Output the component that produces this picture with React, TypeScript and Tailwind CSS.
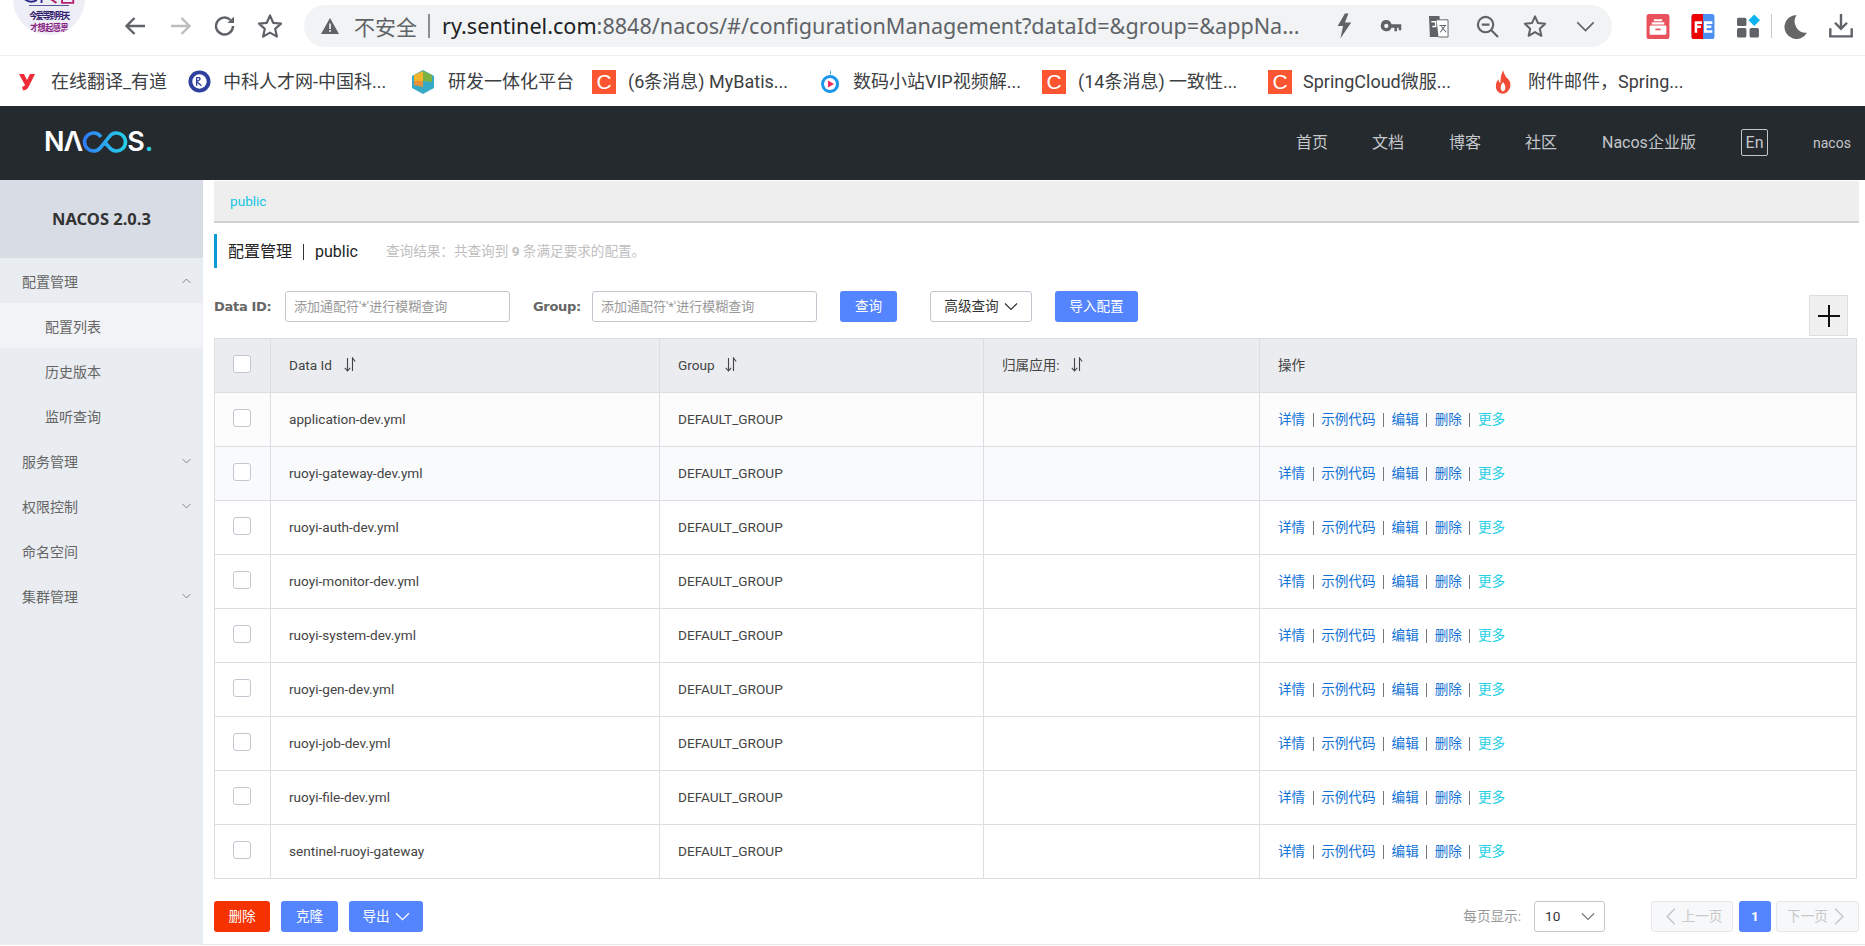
import React from "react";

const FONT = "[font-family:'Roboto','Noto_Sans_CJK_SC',sans-serif]";

function Chevron({ up = false, className = "" }: { up?: boolean; className?: string }) {
  return (
    <svg viewBox="0 0 14 8" fill="none" stroke="currentColor" strokeWidth="1.2" className={className}>
      <path d={up ? "M1 7 L7 1 L13 7" : "M1 1 L7 7 L13 1"} />
    </svg>
  );
}

function Sort({ className = "ml-[10px]" }: { className?: string }) {
  return (
    <svg viewBox="0 0 12 15" width="12" height="15" fill="none" stroke="#444" strokeWidth="1.1" className={`${className} -mt-[2px] shrink-0`}>
      <path d="M3.5 1 V14 M0.8 10.8 L3.5 14 L6.2 10.8" />
      <path d="M8.5 14 V1 L11.2 4.5" />
    </svg>
  );
}

function Toolbar() {
  return (
    <div className="relative h-[56px] shrink-0 bg-white border-b border-[#ececec] flex items-start">
      <div className="absolute left-[13px] -top-[37px] w-[72px] h-[72px] rounded-full bg-[#eeeef6] overflow-hidden flex flex-col items-center justify-end pb-[2px] font-['Noto_Sans_CJK_SC',sans-serif] font-bold">
        <svg viewBox="0 0 60 5" className="w-[56px] h-[5px] shrink-0">
          <path d="M4 0 Q10 5 17 1 M22 0 L22 4" fill="none" stroke="#2a2a8a" strokeWidth="2" />
          <path d="M32 0 L38 4 M44 0 H56 V4 H44 Z" fill="none" stroke="#b3206c" strokeWidth="2" />
        </svg>
        <span className="w-[40px] h-px bg-[#55559a] mt-[1px] mb-[3px] shrink-0" />
        <span className="text-[8px] h-[12px] leading-[12px] scale-y-[1.2] tracking-[-1.4px] text-[#33206e] whitespace-nowrap">今爱等到明天</span>
        <span className="text-[8px] h-[12px] leading-[12px] scale-y-[1.2] tracking-[-0.4px] text-[#8a2484] whitespace-nowrap">才想起感恩</span>
      </div>

      <div className="flex items-center h-[52px] ml-[124px] text-[#5f6368]">
        <svg viewBox="0 0 22 20" className="w-[22px] h-[20px]" fill="none" stroke="currentColor" strokeWidth="2.4"><path d="M21 10 H3 M10.5 2 L2.5 10 L10.5 18" /></svg>
        <svg viewBox="0 0 22 20" className="w-[22px] h-[20px] ml-[24px] text-[#bdbdbd]" fill="none" stroke="currentColor" strokeWidth="2.4"><path d="M1 10 H19 M11.5 2 L19.5 10 L11.5 18" /></svg>
        <svg viewBox="0 0 24 24" className="w-[24px] h-[24px] ml-[21px]" fill="none" stroke="currentColor" strokeWidth="2.4"><path d="M20 12 A8.5 8.5 0 1 1 17.5 6" /><path d="M21 2.5 V9 H14.5 Z" fill="currentColor" stroke="none" /></svg>
        <svg viewBox="0 0 26 26" className="w-[26px] h-[26px] ml-[20px]" fill="none" stroke="currentColor" strokeWidth="2.2"><path d="M13 2.5 L16.2 9.8 L24 10.6 L18.2 15.9 L19.9 23.6 L13 19.6 L6.1 23.6 L7.8 15.9 L2 10.6 L9.8 9.8 Z" strokeLinejoin="round" /></svg>
      </div>

      <div className="ml-[21px] mt-[5px] w-[1308px] h-[42px] rounded-full bg-[#f1f3f4] flex items-center pl-[17px] shrink-0 text-[#5f6368]">
        <svg viewBox="0 0 18 16" className="w-[18px] h-[16px] shrink-0" fill="currentColor"><path d="M9 0 L18 16 H0 Z" /><rect x="8.2" y="5.5" width="1.7" height="5.5" fill="#f1f3f4" /><rect x="8.2" y="12" width="1.7" height="1.8" fill="#f1f3f4" /></svg>
        <span className="ml-[15px] text-[21px] font-['Noto_Sans_CJK_SC',sans-serif] leading-none">不安全</span>
        <span className="ml-[11px] w-[2px] h-[24px] bg-[#8a8d91]" />
        <span className="ml-[12px] text-[21.6px] font-['Noto_Sans',sans-serif] leading-none whitespace-nowrap w-[862px] shrink-0">
          <span className="text-[#202124]">ry.sentinel.com</span>:8848/nacos/#/configurationManagement?dataId=&amp;group=&amp;appNa...
        </span>
        <svg viewBox="0 0 20 28" className="w-[18px] h-[26px] ml-[31px]" fill="currentColor"><path d="M11 0 L3 14 H9 L6 28 L18 10 H11 L15 0 Z" /></svg>
        <svg viewBox="0 0 24 14" className="w-[22px] h-[12px] ml-[27px]" fill="currentColor"><path d="M6.5 0 A6.5 6.5 0 1 0 12.6 9 H16 V13 H19 V9 H21 V12 H24 V5 H12.6 A6.5 6.5 0 0 0 6.5 0 Z M6.5 4.5 A2.5 2.5 0 1 1 6.5 9.5 A2.5 2.5 0 0 1 6.5 4.5 Z" fillRule="evenodd" /></svg>
        <svg viewBox="0 0 22 24" className="w-[21px] h-[23px] ml-[26px]"><path d="M1 1 H12 L14 23 H2 Z" fill="currentColor" /><path d="M9 5 H21 V23 H11" fill="#fff" stroke="currentColor" strokeWidth="1" /><path d="M3.5 7 H8 V12 H4.5" stroke="#fff" strokeWidth="1.4" fill="none" /><path d="M12 11 H19 M13 18 L18 11 M14 12 L19 18" stroke="currentColor" strokeWidth="1.1" fill="none" /></svg>
        <svg viewBox="0 0 24 24" className="w-[23px] h-[23px] ml-[27px]" fill="none" stroke="currentColor" strokeWidth="2.2"><circle cx="10" cy="10" r="8" /><path d="M6 10 H14 M16 16 L23 23" /></svg>
        <svg viewBox="0 0 26 26" className="w-[24px] h-[24px] ml-[24px]" fill="none" stroke="currentColor" strokeWidth="2.2"><path d="M13 2.5 L16.2 9.8 L24 10.6 L18.2 15.9 L19.9 23.6 L13 19.6 L6.1 23.6 L7.8 15.9 L2 10.6 L9.8 9.8 Z" strokeLinejoin="round" /></svg>
        <Chevron className="w-[19px] h-[11px] ml-[29px]" />
      </div>

      <div className="flex items-center h-[52px] ml-[34px]">
        <svg viewBox="0 0 22 24" className="w-[24px] h-[25px]"><rect width="22" height="24" rx="2.5" fill="#e9525d" /><path d="M7 5 H15 V7 H7 Z M5 8 H17 V10 H5 Z" fill="#fff" /><rect x="3" y="11" width="16" height="9" rx="1" fill="#fff" /><rect x="8.5" y="14" width="5" height="1.6" fill="#e9525d" /></svg>
        <svg viewBox="0 0 22 24" className="w-[24px] h-[25px] ml-[21px]"><rect width="22" height="24" rx="2.5" fill="#4d90f0" /><path d="M2.5 0 H11 V24 H2.5 A2.5 2.5 0 0 1 0 21.5 V2.5 A2.5 2.5 0 0 1 2.5 0 Z" fill="#ee0000" /><path d="M3 7 H10 V9.5 H5.5 V11 H9 V13.5 H5.5 V18 H3 Z M12 7 H20 V9.5 H14.5 V11 H19 V13.5 H14.5 V15.5 H20 V18 H12 Z" fill="#fff" /></svg>
        <svg viewBox="0 0 22 22" className="w-[23px] h-[24px] ml-[22px]"><rect x="0" y="3" width="9" height="8" rx="1.5" fill="#5f6368" /><rect x="0" y="13" width="9" height="9" rx="1.5" fill="#5f6368" /><rect x="12" y="13" width="9" height="9" rx="1.5" fill="#5f6368" /><path d="M16.5 0 L22 5.5 L16.5 11 L11 5.5 Z" fill="#0cb4f2" /></svg>
        <span className="w-px h-[24px] bg-[#c8c8c8] ml-[11px]" />
        <svg viewBox="0 0 24 24" className="w-[25px] h-[25px] ml-[11px]" fill="#666"><path d="M13 1 A11.5 11.5 0 1 0 23 18 A11 11 0 0 1 13 1 Z" /></svg>
        <svg viewBox="0 0 22 22" className="w-[24px] h-[24px] ml-[21px]" fill="none" stroke="#5f6368" strokeWidth="2.2"><path d="M11 0 V13 M5.5 8 L11 13.5 L16.5 8 M1.2 13 V20.5 H20.8 V13" /></svg>
      </div>
    </div>
  );
}

function CIcon() {
  return (
    <span className="w-[24px] h-[24px] bg-[#fc5531] text-white text-[21px] leading-[24px] text-center font-['Liberation_Sans',sans-serif] shrink-0">C</span>
  );
}

function BookmarkText({ children, className = "" }: { children: React.ReactNode; className?: string }) {
  return <span className={`text-[#3c4043] text-[18px] whitespace-nowrap leading-none ${className}`}>{children}</span>;
}

function Bookmarks() {
  return (
    <div className={`h-[50px] shrink-0 bg-white flex items-center pt-[1px] ${FONT}`}>
      <svg viewBox="0 0 16 18" className="w-[16px] h-[18px] ml-[19px] shrink-0" fill="#f02b37"><path d="M0 1 H5 L8 7 L11 1 H16 L10 13 Q8.5 17 4 17.5 L3 13.8 Q5.5 13.5 6 12 Z" /></svg>
      <BookmarkText className="ml-[16px] w-[121px]">在线翻译_有道</BookmarkText>
      <svg viewBox="0 0 24 24" className="w-[23px] h-[23px] ml-[16px] shrink-0"><circle cx="12" cy="12" r="11.5" fill="#2e3f9e" /><circle cx="12" cy="12" r="7.5" fill="#fff" /><path d="M9 7.5 V16.5 M9 8 H12 Q14 10 9 12 L14 16.5" fill="none" stroke="#2e3f9e" strokeWidth="1.4" /></svg>
      <BookmarkText className="ml-[12px] w-[167px]">中科人才网-中国科...</BookmarkText>
      <svg viewBox="0 0 24 24" className="w-[24px] h-[24px] ml-[21px] shrink-0"><path d="M12 0 L23 6 V18 L12 24 L1 18 V6 Z" fill="#36a9c4" /><path d="M3 5 L12 1 V11 L3 11 Z" fill="#f1b42c" /><path d="M12 1 L21 5 V12 L12 11 Z" fill="#7cb342" /><path d="M3 11 H12 V17 L3 15 Z" fill="#e8903a" /></svg>
      <BookmarkText className="ml-[13px] w-[126px]">研发一体化平台</BookmarkText>
      <span className="ml-[18px] flex"><CIcon /></span>
      <BookmarkText className="ml-[12px] w-[165px]">(6条消息) MyBatis...</BookmarkText>
      <svg viewBox="0 0 22 26" className="w-[22px] h-[26px] ml-[26px] shrink-0"><path d="M11 1 Q13 4 11 6 A9 9 0 1 0 20 14 A9 9 0 0 0 11 6" fill="#1c97ea" /><circle cx="11" cy="15" r="6" fill="#fff" /><path d="M9 11.5 L15 15 L9 18.5 Z" fill="#ee2a5b" /></svg>
      <BookmarkText className="ml-[12px] w-[170px]">数码小站VIP视频解...</BookmarkText>
      <span className="ml-[19px] flex"><CIcon /></span>
      <BookmarkText className="ml-[12px] w-[161px]">(14条消息) 一致性...</BookmarkText>
      <span className="ml-[29px] flex"><CIcon /></span>
      <BookmarkText className="ml-[11px] w-[158px]">SpringCloud微服...</BookmarkText>
      <svg viewBox="0 0 20 26" className="w-[18px] h-[24px] ml-[33px] shrink-0"><path d="M10 0 Q12 7 16 10 Q20 15 17 21 Q14 26 9 26 Q2 25 2 17 Q2 13 5 10 Q5 13 7 14 Q7 6 10 0 Z" fill="#ef4b36" /><path d="M10 13 Q14 18 12 22 Q10 25 8 22 Q6 18 10 13 Z" fill="#fff" /></svg>
      <BookmarkText className="ml-[16px] w-[161px]">附件邮件，Spring...</BookmarkText>
    </div>
  );
}

function Header() {
  return (
    <div className={`h-[74px] shrink-0 bg-[#252a2f] flex items-center ${FONT}`}>
      <div className="ml-[44px] mb-[3px] flex items-center h-[24px] text-white font-['Inter',sans-serif] font-semibold text-[27px] leading-none">
        <span>N</span>
        <span className="-ml-[1px]">Λ</span>
        <svg viewBox="0 0 46 22" className="w-[46px] h-[22px] -ml-[1px]" fill="none" strokeWidth="3.6">
          <defs>
            <linearGradient id="nacosg" x1="0" x2="1" y1="0" y2="0">
              <stop offset="0" stopColor="#2f7ef5" />
              <stop offset="1" stopColor="#25d0e8" />
            </linearGradient>
          </defs>
          <path d="M19 6 A9 9 0 1 0 19 16 L27 6 A9 9 0 1 1 27 16 L23.5 12" stroke="url(#nacosg)" />
        </svg>
        <span className="-ml-[1px]">S</span>
        <span className="text-[#25d0e8]">.</span>
      </div>
      <div className="ml-auto flex items-center text-[#c4c6c9] text-[16px] leading-none mb-[1px]">
        <span className="w-[32px]">首页</span>
        <span className="ml-[44px] w-[32px]">文档</span>
        <span className="ml-[45px] w-[32px]">博客</span>
        <span className="ml-[44px] w-[32px]">社区</span>
        <span className="ml-[45px] w-[94px] whitespace-nowrap">Nacos企业版</span>
        <span className="ml-[45px] w-[27px] h-[27px] border border-[#c4c6c9] rounded-[2px] flex items-center justify-center text-[16px]">En</span>
        <span className="ml-[45px] mr-[15px] text-[14px] w-[37px]">nacos</span>
      </div>
    </div>
  );
}

function MenuRow({ label, sub = false, active = false, chevron, }: { label: string; sub?: boolean; active?: boolean; chevron?: "up" | "down" }) {
  return (
    <div className={`h-[45px] shrink-0 flex items-center pt-[3px] text-[14px] text-[#666] ${sub ? "pl-[45px]" : "pl-[22px]"} ${active ? "bg-[#f2f3f7]" : ""}`}>
      <span>{label}</span>
      {chevron && <Chevron up={chevron === "up"} className="ml-auto mr-[12px] w-[9px] h-[6px] text-[#666] -mt-[3px]" />}
    </div>
  );
}

function Sidebar() {
  return (
    <div className={`w-[203px] shrink-0 bg-[#e9ecf1] flex flex-col ${FONT} h-[765px]`}>
      <div className="h-[78px] bg-[#d8dce4] flex items-center justify-center text-[#333] font-bold text-[16.5px] font-['Noto_Sans',sans-serif]">NACOS 2.0.3</div>
      <MenuRow label="配置管理" chevron="up" />
      <MenuRow label="配置列表" sub active />
      <MenuRow label="历史版本" sub />
      <MenuRow label="监听查询" sub />
      <MenuRow label="服务管理" chevron="down" />
      <MenuRow label="权限控制" chevron="down" />
      <MenuRow label="命名空间" />
      <MenuRow label="集群管理" chevron="down" />
    </div>
  );
}

function Checkbox() {
  return <span className="block w-[18px] h-[18px] bg-white border border-[#c4c6cf] rounded-[3px] mx-auto -mt-[4px]" />;
}

const ROWS = [
  "application-dev.yml",
  "ruoyi-gateway-dev.yml",
  "ruoyi-auth-dev.yml",
  "ruoyi-monitor-dev.yml",
  "ruoyi-system-dev.yml",
  "ruoyi-gen-dev.yml",
  "ruoyi-job-dev.yml",
  "ruoyi-file-dev.yml",
  "sentinel-ruoyi-gateway",
];

function Ops() {
  const Sep = () => (
    <span className="w-[16px] flex justify-center">
      <span className="w-px h-[14px] bg-[#777]" />
    </span>
  );
  return (
    <div className="flex items-center text-[#1273d6]">
      <span>详情</span><Sep />
      <span>示例代码</span><Sep />
      <span>编辑</span><Sep />
      <span>删除</span><Sep />
      <span className="text-[#27cfe3]">更多</span>
    </div>
  );
}

function rowBg(i: number) {
  if (i === 0) return "bg-[#fcfcfc]";
  if (i === 1) return "bg-[#f9fafc]";
  return "bg-white";
}

function ConfigTable() {
  const th = "border border-[#dcdee3] font-normal text-left pl-[18px]";
  const td = "border border-[#dcdee3] pl-[18px]";
  return (
    <table className="w-[1643px] table-fixed border-collapse text-[13.6px] text-[#444] leading-none">
      <colgroup>
        <col className="w-[56px]" />
        <col className="w-[389px]" />
        <col className="w-[324px]" />
        <col className="w-[276px]" />
        <col />
      </colgroup>
      <thead>
        <tr className="h-[54px] bg-[#ebecf0]">
          <th className="border border-[#dcdee3] pr-[2px]"><Checkbox /></th>
          <th className={th}><div className="flex items-center">Data Id<Sort className="ml-[12px]" /></div></th>
          <th className={th}><div className="flex items-center">Group<Sort /></div></th>
          <th className={th}><div className="flex items-center">归属应用:<Sort className="ml-[11px]" /></div></th>
          <th className={th}>操作</th>
        </tr>
      </thead>
      <tbody>
        {ROWS.map((r, i) => (
          <tr key={r} className={`h-[54px] ${rowBg(i)}`}>
            <td className="border border-[#dcdee3] pr-[2px]"><Checkbox /></td>
            <td className={td}>{r}</td>
            <td className={td}>DEFAULT_GROUP</td>
            <td className={td}></td>
            <td className={td}><Ops /></td>
          </tr>
        ))}
      </tbody>
    </table>
  );
}

function Btn({ children, className = "" }: { children: React.ReactNode; className?: string }) {
  return (
    <button className={`h-[31px] rounded-[3px] bg-[#5584ff] text-white text-[13.6px] flex items-center justify-center leading-none ${className}`}>
      {children}
    </button>
  );
}

function Main() {
  const input = "h-[31px] border border-[#c4c6cf] rounded-[3px] px-[8px] flex items-center text-[13px] text-[#999] leading-none bg-white";
  const label = "font-bold text-[13px] text-[#666] font-['DejaVu_Sans',sans-serif] leading-none tracking-[-0.3px]";
  return (
    <div className={`flex-1 min-w-0 pl-[11px] pr-[6px] ${FONT} flex flex-col h-[765px] border-b border-[#e8e8e8]`}>
      <div className="h-[42px] mt-[1px] shrink-0 bg-[#eeeeee] border-b-2 border-[#d2d2d2] flex items-center pl-[16px] text-[13.6px] text-[#16c5df]">public</div>
      <div className="mt-[11px] h-[34px] shrink-0 border-l-[3px] border-[#0a9ad6] flex items-center pl-[11px] pt-[2px]">
        <span className="text-[16px] text-[#222] leading-none">配置管理</span>
        <span className="mx-[11px] w-px h-[16px] bg-[#333]" />
        <span className="text-[16px] text-[#222] leading-none">public</span>
        <span className="ml-[28px] text-[13.6px] text-[#c0c0c0] leading-none">查询结果：共查询到 <b className="font-bold">9</b> 条满足要求的配置。</span>
      </div>
      <div className="relative mt-[23px] h-[31px] shrink-0 flex items-center">
        <span className={`${label} w-[71px]`}>Data ID:</span>
        <div className={`${input} w-[225px]`}>添加通配符'*'进行模糊查询</div>
        <span className={`${label} ml-[23px] w-[59px]`}>Group:</span>
        <div className={`${input} w-[225px]`}>添加通配符'*'进行模糊查询</div>
        <Btn className="ml-[23px] w-[57px]">查询</Btn>
        <button className="ml-[33px] w-[102px] h-[31px] rounded-[3px] border border-[#c4c6cf] bg-white text-[13.6px] text-[#333] flex items-center justify-center gap-[5px] leading-none">
          高级查询<Chevron className="w-[14px] h-[9px]" />
        </button>
        <Btn className="ml-[23px] w-[83px]">导入配置</Btn>
        <button className="absolute left-[1595px] top-[4px] w-[39px] h-[41px] bg-[#f0f0f0] border border-[#dedede] flex items-center justify-center">
          <svg viewBox="0 0 24 24" className="w-[24px] h-[24px]" stroke="#111" strokeWidth="2"><path d="M12 1 V23 M1 12 H23" /></svg>
        </button>
      </div>
      <div className="mt-[16px] shrink-0"><ConfigTable /></div>
      <div className="mt-[22px] h-[31px] shrink-0 flex items-center">
        <Btn className="w-[56px] !bg-[#f63200]">删除</Btn>
        <Btn className="ml-[11px] w-[57px]">克隆</Btn>
        <Btn className="ml-[11px] w-[74px] gap-[5px]">导出<Chevron className="w-[15px] h-[9px]" /></Btn>
        <span className="ml-auto text-[13.6px] text-[#999] leading-none">每页显示:</span>
        <div className="ml-[13px] w-[71px] h-[31px] border border-[#c4c6cf] rounded-[3px] flex items-center pl-[10px] pr-[9px] text-[13.6px] text-[#333] leading-none">
          10<Chevron className="ml-auto w-[14px] h-[9px] text-[#777]" />
        </div>
        <button className="ml-[46px] w-[82px] h-[31px] border border-[#e6e7eb] rounded-[3px] bg-[#f7f8fa] text-[#c8c8c8] text-[13.6px] flex items-center justify-center gap-[2px] leading-none">
          <Chevron up className="w-[18px] h-[11px] -rotate-90" />上一页
        </button>
        <Btn className="ml-[6px] w-[32px] font-bold">1</Btn>
        <button className="ml-[5px] w-[83px] h-[31px] border border-[#e6e7eb] rounded-[3px] bg-[#f7f8fa] text-[#c8c8c8] text-[13.6px] flex items-center justify-center gap-[2px] leading-none">
          下一页<Chevron up className="w-[18px] h-[11px] rotate-90" />
        </button>
      </div>
    </div>
  );
}

export default function App() {
  return (
    <div className="w-[1865px] h-[946px] overflow-hidden bg-white flex flex-col">
      <Toolbar />
      <Bookmarks />
      <Header />
      <div className="flex flex-1 min-h-0">
        <Sidebar />
        <Main />
      </div>
    </div>
  );
}
